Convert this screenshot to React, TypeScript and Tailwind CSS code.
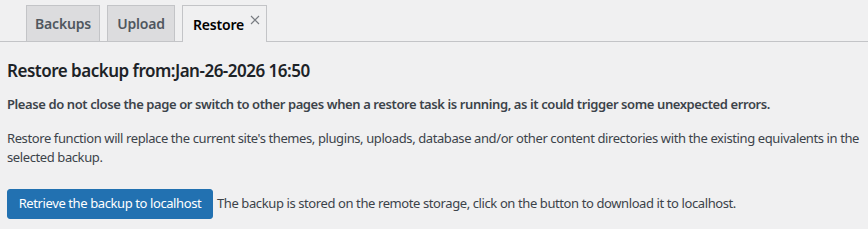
export default function App() {
  return (
    <div className="min-h-[229px] w-full bg-[#f0f0f1] text-[#3c434a] text-[13px] tracking-[-0.4px] font-['Noto_Sans','Open_Sans',sans-serif]">
      <div className="pt-[6px] flex items-end border-b border-[#c3c4c7] pl-[26px] gap-[7px] h-[42px]">
        <div className="h-[36px] w-[74px] flex items-center justify-center border border-b-0 border-[#c3c4c7] bg-[#dcdcde] text-[#50575e] text-[14px] tracking-[-0.2px] font-semibold">Backups</div>
        <div className="h-[36px] w-[68px] flex items-center justify-center border border-b-0 border-[#c3c4c7] bg-[#dcdcde] text-[#50575e] text-[14px] tracking-[-0.2px] font-semibold">Upload</div>
        <div className="h-[37px] w-[85px] mb-[-1px] flex items-center pl-[10px] border border-b-0 border-[#c3c4c7] bg-[#f0f0f1] text-black text-[14px] tracking-[-0.2px] font-semibold gap-[6px]">
          <span>Restore</span>
          <svg width="10" height="10" viewBox="0 0 10 10" className="mt-[-8px]">
            <path d="M1 1 L9 9 M9 1 L1 9" stroke="#787c82" strokeWidth="1.1" fill="none" />
          </svg>
        </div>
      </div>
      <div className="px-[7px]">
        <h2 className="text-[17px] font-semibold text-[#1d2327] mt-[18px] leading-[22px] tracking-[-0.5px]">Restore backup from:Jan-26-2026 16:50</h2>
        <p className="font-semibold mt-[13px] leading-[19px]">Please do not close the page or switch to other pages when a restore task is running, as it could trigger some unexpected errors.</p>
        <p className="mt-[15px] leading-[19px]">Restore function will replace the current site's themes, plugins, uploads, database and/or other content directories with the existing equivalents in the selected backup.</p>
        <div className="mt-[22px] flex items-center gap-[4px]">
          <button className="h-[30px] w-[206px] rounded-[3px] bg-[#2271b1] text-white text-[13px] tracking-[-0.4px] border border-[#2271b1]">Retrieve the backup to localhost</button>
          <span>The backup is stored on the remote storage, click on the button to download it to localhost.</span>
        </div>
      </div>
    </div>
  );
}
